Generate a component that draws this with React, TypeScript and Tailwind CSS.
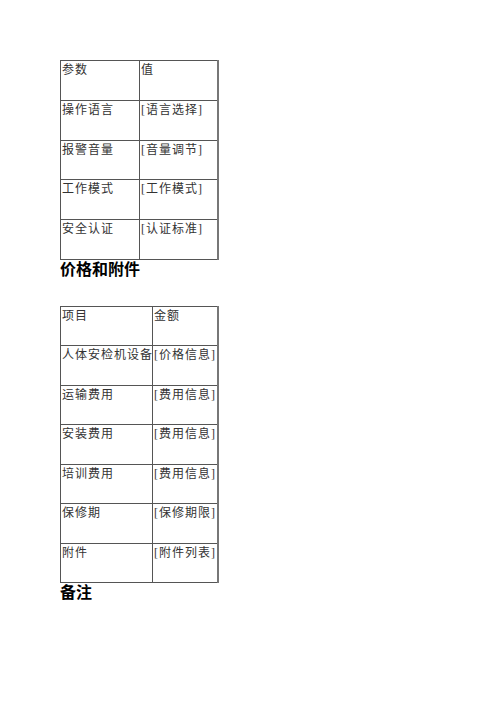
import React from 'react';

const specRows: [string, string][] = [
  ['参数', '值'],
  ['操作语言', '[语言选择]'],
  ['报警音量', '[音量调节]'],
  ['工作模式', '[工作模式]'],
  ['安全认证', '[认证标准]'],
];

const priceRows: [string, string][] = [
  ['项目', '金额'],
  ['人体安检机设备', '[价格信息]'],
  ['运输费用', '[费用信息]'],
  ['安装费用', '[费用信息]'],
  ['培训费用', '[费用信息]'],
  ['保修期', '[保修期限]'],
  ['附件', '[附件列表]'],
];

function SimpleTable({ rows, firstCol, rowH }: { rows: [string, string][]; firstCol: string; rowH: string }) {
  return (
    <table className="border-collapse w-[159px] table-fixed">
      <colgroup>
        <col className={firstCol} />
        <col />
      </colgroup>
      <tbody>
        {rows.map(([a, b], i) => (
          <tr key={i} className={rowH}>
            <td className="border border-[#555] align-top px-[1px] pt-[1px] text-[12px] leading-[16px] tracking-[1px] whitespace-nowrap">
              {a}
            </td>
            <td className="border border-[#555] border-r-2 border-r-[#777] align-top px-[1px] pt-[1px] text-[12px] leading-[16px] tracking-[1px] whitespace-nowrap">
              {b}
            </td>
          </tr>
        ))}
      </tbody>
    </table>
  );
}

export default function App() {
  return (
    <div
      className="min-h-[707px] w-[500px] bg-white text-[#333] pl-[60px] pt-[60px]"
      style={{ fontFamily: '"Liberation Serif", "Noto Sans CJK SC", serif' }}
    >
      <SimpleTable rows={specRows} firstCol="w-[79px]" rowH="h-[39.8px]" />
      <h2 className="text-[16px] leading-[22px] font-bold text-black -mt-[1px]">价格和附件</h2>
      <div className="mt-[25px]">
        <SimpleTable rows={priceRows} firstCol="w-[92px]" rowH="h-[39.5px]" />
      </div>
      <h2 className="text-[16px] leading-[22px] font-bold text-black -mt-[1px]">备注</h2>
    </div>
  );
}
